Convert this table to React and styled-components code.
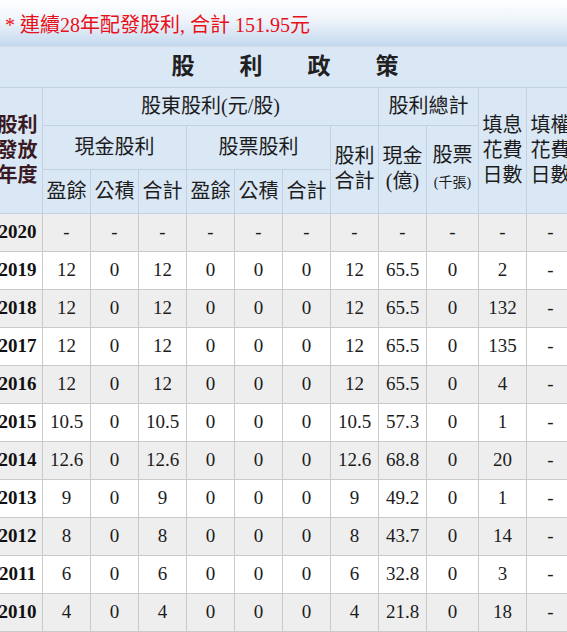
import React from "react"
import styled, { createGlobalStyle } from "styled-components"

const rows = [
  ["2020", "-", "-", "-", "-", "-", "-", "-", "-", "-", "-", "-"],
  ["2019", "12", "0", "12", "0", "0", "0", "12", "65.5", "0", "2", "-"],
  ["2018", "12", "0", "12", "0", "0", "0", "12", "65.5", "0", "132", "-"],
  ["2017", "12", "0", "12", "0", "0", "0", "12", "65.5", "0", "135", "-"],
  ["2016", "12", "0", "12", "0", "0", "0", "12", "65.5", "0", "4", "-"],
  ["2015", "10.5", "0", "10.5", "0", "0", "0", "10.5", "57.3", "0", "1", "-"],
  ["2014", "12.6", "0", "12.6", "0", "0", "0", "12.6", "68.8", "0", "20", "-"],
  ["2013", "9", "0", "9", "0", "0", "0", "9", "49.2", "0", "1", "-"],
  ["2012", "8", "0", "8", "0", "0", "0", "8", "43.7", "0", "14", "-"],
  ["2011", "6", "0", "6", "0", "0", "0", "6", "32.8", "0", "3", "-"],
  ["2010", "4", "0", "4", "0", "0", "0", "4", "21.8", "0", "18", "-"]
]

const widths = [50, 48, 48, 48, 48, 48, 48, 48, 48, 52, 48, 48]

const GlobalStyle = createGlobalStyle`
  body {
    margin: 0;
    background: #fff;
    overflow: hidden;
    font-family: "Liberation Serif", "Noto Sans CJK TC", serif;
  }
`

const Page = styled.div`
  width: 582px;
  margin-left: -8px;
`

const Notice = styled.div`
  height: 47px;
  box-sizing: border-box;
  padding: 12px 0 0 13px;
  border-bottom: 1px solid #cfdbe6;
  background: linear-gradient(#ffffff 0%, #eef4fa 45%, #c3d8ee 100%);
  color: #e8101a;
  font-size: 20px;
  line-height: 26px;
  white-space: nowrap;
`

const Table = styled.table`
  width: 582px;
  table-layout: fixed;
  border-collapse: collapse;
  color: #1c1c1c;
`

const Head = styled.th`
  background: #dae7f5;
  border: 1px solid #c2d2e2;
  font-family: "Liberation Serif", "Noto Sans CJK TC", serif;
  font-weight: normal;
  font-size: 20px;
  line-height: 25px;
  padding: 0 2px;
  text-align: center;
  vertical-align: middle;
  color: ${p => (p.$year ? "#3a1a22" : "#1c1c1c")};
  ${p => p.$year && "font-weight: bold;"}
`

const Title = styled(Head)`
  border-top: none;
  font-weight: bold;
  font-size: 23px;
  letter-spacing: 45px;
  padding-left: 50px;
  color: #202020;
`

const Small = styled.span`
  font-size: 14px;
`

const HeadRow = styled.tr`
  height: ${p => p.$h}px;
`

const Row = styled.tr`
  height: 38px;
  background: ${p => (p.$gray ? "#eeeeee" : "#ffffff")};
`

const Cell = styled.td`
  border: 1px solid #c9c9c9;
  font-size: 19px;
  text-align: center;
  vertical-align: middle;
  padding: 0;
  white-space: nowrap;
  ${p => p.$year && "font-weight: bold; color: #111;"}
`

export default function App() {
  return (
    <Page>
      <GlobalStyle />
      <Notice>* 連續28年配發股利, 合計 151.95元</Notice>
      <Table>
        <colgroup>
          {widths.map((w, i) => (
            <col key={i} style={{ width: w }} />
          ))}
        </colgroup>
        <thead>
          <HeadRow $h={40}>
            <Title colSpan={12}>股利政策</Title>
          </HeadRow>
          <HeadRow $h={38}>
            <Head rowSpan={3} $year>
              股利
              <br />
              發放
              <br />
              年度
            </Head>
            <Head colSpan={7}>股東股利(元/股)</Head>
            <Head colSpan={2}>股利總計</Head>
            <Head rowSpan={3}>
              填息
              <br />
              花費
              <br />
              日數
            </Head>
            <Head rowSpan={3}>
              填權
              <br />
              花費
              <br />
              日數
            </Head>
          </HeadRow>
          <HeadRow $h={44}>
            <Head colSpan={3}>現金股利</Head>
            <Head colSpan={3}>股票股利</Head>
            <Head rowSpan={2}>
              股利
              <br />
              合計
            </Head>
            <Head rowSpan={2}>
              現金
              <br />
              (億)
            </Head>
            <Head rowSpan={2}>
              股票
              <br />
              <Small>(千張)</Small>
            </Head>
          </HeadRow>
          <HeadRow $h={44}>
            <Head>盈餘</Head>
            <Head>公積</Head>
            <Head>合計</Head>
            <Head>盈餘</Head>
            <Head>公積</Head>
            <Head>合計</Head>
          </HeadRow>
        </thead>
        <tbody>
          {rows.map((r, i) => (
            <Row key={r[0]} $gray={i % 2 === 0}>
              {r.map((v, j) => (
                <Cell key={j} $year={j === 0}>
                  {v}
                </Cell>
              ))}
            </Row>
          ))}
        </tbody>
      </Table>
    </Page>
  )
}
